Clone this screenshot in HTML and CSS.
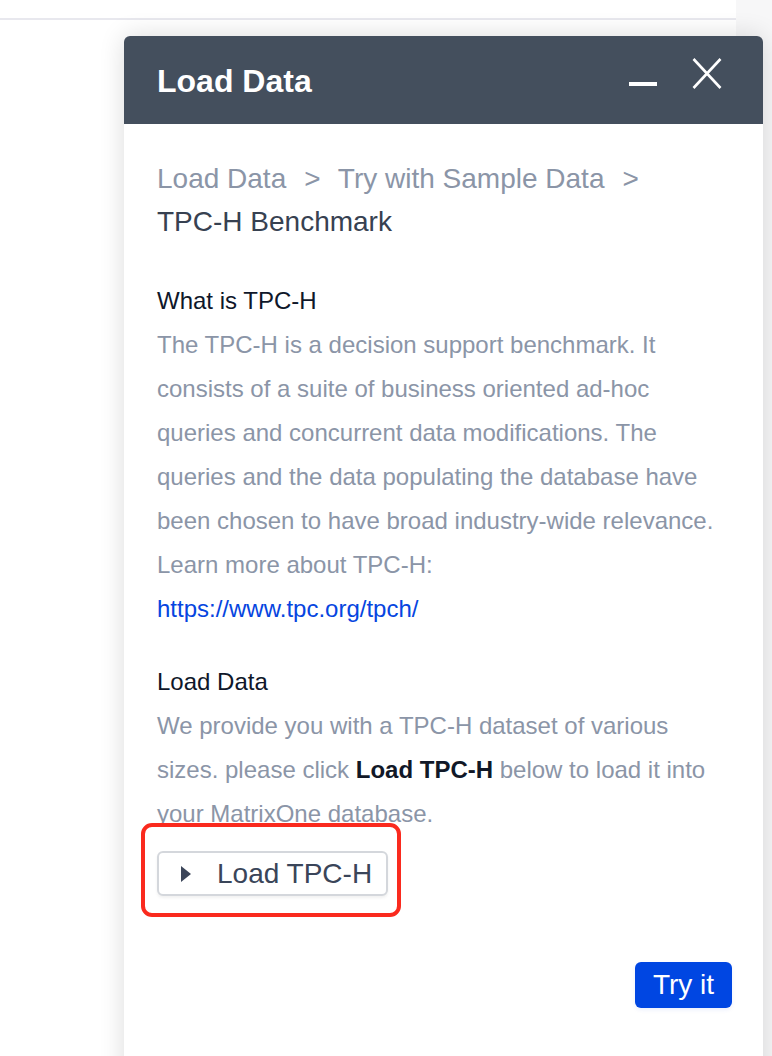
FILE: index.html
```html
<!DOCTYPE html>
<html lang="en">
<head>
<meta charset="utf-8">
<title>Load Data</title>
<link rel="stylesheet" href="styles.css">
</head>
<body>
<div class="page">
  <div class="main">
    <div class="topbar"></div>
  </div>
  <div class="rail"></div>
</div>

<section class="panel">
  <header class="panel-head">
    <h1 class="panel-title">Load Data</h1>
    <div class="panel-actions">
      <button class="icon-btn" aria-label="Minimize">
        <svg width="28" height="28" viewBox="0 0 28 28"><rect x="0" y="24" width="28" height="4" fill="#ffffff"/></svg>
      </button>
      <button class="icon-btn" aria-label="Close">
        <svg width="30" height="31" viewBox="0 0 30 31"><path d="M1.5 1 L28.5 30 M28.5 1 L1.5 30" stroke="#ffffff" stroke-width="2.6" fill="none"/></svg>
      </button>
    </div>
  </header>

  <div class="panel-body">
    <nav class="crumbs">
      <span class="crumb">Load Data</span><span class="sep">&gt;</span> <span class="crumb">Try with Sample Data</span><span class="sep">&gt;</span> <span class="crumb current">TPC-H Benchmark</span>
    </nav>

    <div class="section first">
      <h2 class="sec-title">What is TPC-H</h2>
      <p class="sec-text">The TPC-H is a decision support benchmark. It consists of a suite of business oriented ad-hoc queries and concurrent data modifications. The queries and the data populating the database have been chosen to have broad industry-wide relevance.</p>
      <p class="sec-text">Learn more about TPC-H:</p>
      <p class="sec-text"><a class="link" href="#">https://www.tpc.org/tpch/</a></p>
    </div>

    <div class="section">
      <h2 class="sec-title">Load Data</h2>
      <p class="sec-text">We provide you with a TPC-H dataset of various sizes. please click <strong>Load TPC-H</strong> below to load it into your MatrixOne database.</p>
    </div>

    <div class="load-wrap">
      <button class="load-btn">
        <svg class="play" width="10" height="16" viewBox="0 0 10 16"><path d="M0 0 L10 8 L0 16 Z" fill="#3b4559"/></svg>
        <span class="load-label">Load TPC-H</span>
      </button>
      <span class="highlight"></span>
    </div>

    <div class="footer-row">
      <button class="try-btn">Try it</button>
    </div>
  </div>
</section>
</body>
</html>
```

FILE: styles.css
```css
* { box-sizing: border-box; }

html, body {
  margin: 0;
  padding: 0;
  width: 772px;
  height: 1056px;
  overflow: hidden;
  background: #ffffff;
  font-family: "Liberation Sans", Arial, Helvetica, sans-serif;
}

.page {
  display: flex;
  height: 1056px;
}

.main {
  width: 736px;
  background: #ffffff;
}

.topbar {
  height: 20px;
  border-bottom: 2px solid #e8e8ee;
}

.rail {
  flex: 1;
  background: #f7f7f8;
}

.panel {
  position: absolute;
  left: 124px;
  top: 36px;
  width: 639px;
  height: 1060px;
  background: #ffffff;
  border-radius: 6px 6px 0 0;
  box-shadow: 0 0 26px rgba(0, 0, 0, 0.14);
}

.panel-head {
  height: 88px;
  background: #444f5d;
  border-radius: 6px 6px 0 0;
  display: flex;
  align-items: center;
  justify-content: space-between;
  padding: 0 41px 0 33px;
}

.panel-title {
  margin: 0;
  color: #ffffff;
  font-size: 32px;
  font-weight: 700;
  line-height: 1;
  padding-top: 2px;
}

.panel-actions {
  display: flex;
  align-items: flex-start;
  gap: 35px;
  margin-top: -14px;
}

.icon-btn {
  background: none;
  border: 0;
  padding: 0;
  display: block;
}
.icon-btn svg { display: block; }

.panel-body {
  padding: 33px 33px 0 33px;
}

.crumbs {
  font-size: 28px;
  line-height: 43px;
  color: #8b95a7;
  margin-bottom: 36px;
}

.sep { margin: 0 10px 0 18px; }

.crumb.current {
  color: #374151;
  white-space: nowrap;
}

.section.first { margin-top: 0; }
.section { margin-top: 29px; }

.sec-title {
  margin: 0;
  font-size: 24px;
  font-weight: 400;
  line-height: 44px;
  color: #0f172a;
}

.sec-text {
  margin: 0;
  font-size: 24px;
  line-height: 44px;
  color: #8b95a7;
}

.sec-text strong {
  color: #111827;
  font-weight: 700;
}

.link {
  color: #0645e0;
  text-decoration: none;
}

.load-wrap {
  position: relative;
  display: inline-block;
  vertical-align: top;
  margin-top: 15px;
}

.load-btn {
  display: flex;
  align-items: center;
  gap: 26px;
  height: 45px;
  padding: 0 14px 0 22px;
  background: #ffffff;
  border: 2px solid #d4d7dc;
  border-radius: 6px;
  box-shadow: 0 2px 3px rgba(0, 0, 0, 0.06);
  font-family: inherit;
  font-size: 28px;
  color: #3a4559;
  white-space: nowrap;
}

.load-label { line-height: 1; }

.play { display: block; flex: none; }

.highlight {
  position: absolute;
  left: -16px;
  top: -28px;
  width: 260px;
  height: 94px;
  border: 4px solid #fa2a1e;
  border-radius: 11px;
  pointer-events: none;
}

.footer-row {
  display: flex;
  justify-content: flex-end;
  margin-top: 66px;
}

.try-btn {
  display: block;
  width: 97px;
  height: 46px;
  margin-right: -2px;
  background: #0046e2;
  color: #ffffff;
  border: 0;
  border-radius: 6px;
  font-family: inherit;
  font-size: 28px;
  line-height: 46px;
  padding: 0;
  box-shadow: 0 2px 4px rgba(0, 70, 226, 0.08);
}
```
